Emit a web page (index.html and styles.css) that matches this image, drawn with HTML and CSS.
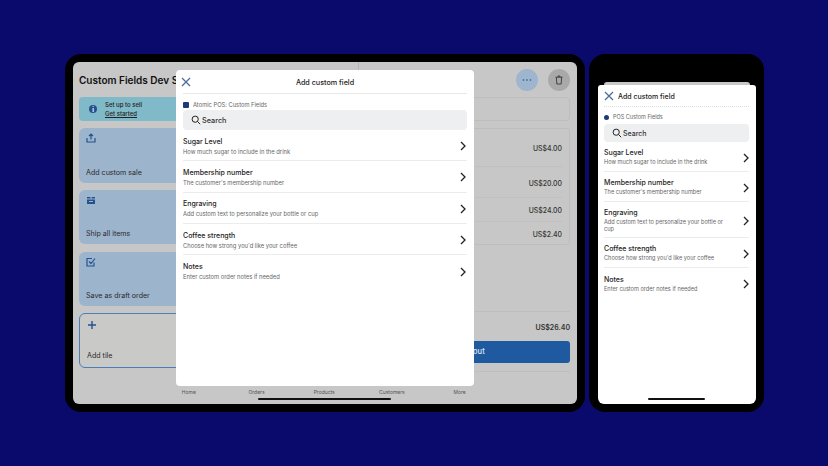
FILE: index.html
```html
<!DOCTYPE html>
<html>
    <head>
        <title>Add custom field</title>
        <link rel="stylesheet" href="styles.css">
    </head>
    <body>
        <div class="stage">
            <div class="tablet">
                <div class="screen">
                    <header class="top">
                        <h1>Custom Fields Dev Store</h1>
                        <span class="round more"><svg width="10" height="4" viewBox="0 0 10 4"><circle cx="1.5" cy="2" r="0.8"/><circle cx="5" cy="2" r="0.8"/><circle cx="8.5" cy="2" r="0.8"/></svg></span>
                        <span class="round trash"><svg width="10" height="10" viewBox="0 0 10 10"><path d="M1.5 2.2h7M4 2.2V1h2v1.2M2.4 2.2l.4 6.8h4.4l.4-6.8" fill="none" stroke="#444" stroke-width="1"/></svg></span>
                    </header>
                    <div class="main">
                        <div class="tiles">
                            <div class="setup">
                                <span class="info">i</span>
                                <div>
                                    <div>Set up to sell</div>
                                    <a>Get started</a>
                                </div>
                            </div>
                            <div class="tile">
                                <svg width="10" height="10" viewBox="0 0 10 10"><path d="M1 5v4h8V5M5 6.5V1M3 3l2-2 2 2" fill="none" stroke="#24528f" stroke-width="1.2"/></svg>
                                <span>Add custom sale</span>
                            </div>
                            <div class="tile">
                                <svg width="10" height="10" viewBox="0 0 10 10"><path d="M1 2h3.4v1.5H1zM5.6 2H9v1.5H5.6zM1 4.5h8V9H1z" fill="#24528f"/><path d="M3 6.5h4" stroke="#a0b6cc"/></svg>
                                <span>Ship all items</span>
                            </div>
                            <div class="tile">
                                <svg width="10" height="10" viewBox="0 0 10 10"><path d="M8 5.5V9H1V1.5h5M3 4.5l2 2L9 1.5" fill="none" stroke="#24528f" stroke-width="1.2"/></svg>
                                <span>Save as draft order</span>
                            </div>
                            <div class="tile add">
                                <svg width="10" height="10" viewBox="0 0 10 10"><path d="M5 1v8M1 5h8" fill="none" stroke="#24528f" stroke-width="1.4"/></svg>
                                <span>Add tile</span>
                            </div>
                        </div>
                        <div class="cart">
                            <div class="customer"></div>
                            <div class="lines">
                                <div class="price first">US$4.00</div>
                                <div class="price second">US$20.00</div>
                                <div class="price third">US$24.00</div>
                                <div class="price fourth">US$2.40</div>
                            </div>
                            <div class="pay">
                                <div class="total">US$26.40</div>
                                <div class="checkout">Checkout</div>
                            </div>
                        </div>
                    </div>
                    <nav class="tabs">
                        <span>Home</span>
                        <span>Orders</span>
                        <span>Products</span>
                        <span>Customers</span>
                        <span>More</span>
                    </nav>
                    <div class="handle wide"></div>

                    <div class="modal">
                        <div class="modal-head">
                            <svg class="close" width="10" height="10" viewBox="0 0 10 10"><path d="M1 1l8 8M9 1l-8 8" fill="none" stroke="#4a6f9c" stroke-width="1.3"/></svg>
                            <h2>Add custom field</h2>
                        </div>
                        <div class="source"><span class="app-icon"></span>Atomic POS: Custom Fields</div>
                        <div class="search">
                            <svg width="10" height="10" viewBox="0 0 10 10"><circle cx="4.2" cy="4.2" r="3.1" fill="none" stroke="#222" stroke-width="1"/><path d="M6.5 6.5L9.2 9.2" stroke="#222" stroke-width="1"/></svg>
                            Search
                        </div>
                        <div class="row">
                            <div class="text"><b>Sugar Level</b><small>How much sugar to include in the drink</small></div>
                            <svg class="chevron" width="6" height="10" viewBox="0 0 6 10"><path d="M1 1l4 4-4 4" fill="none" stroke="#222" stroke-width="1.3"/></svg>
                        </div>
                        <div class="row">
                            <div class="text"><b>Membership number</b><small>The customer's membership number</small></div>
                            <svg class="chevron" width="6" height="10" viewBox="0 0 6 10"><path d="M1 1l4 4-4 4" fill="none" stroke="#222" stroke-width="1.3"/></svg>
                        </div>
                        <div class="row">
                            <div class="text"><b>Engraving</b><small>Add custom text to personalize your bottle or cup</small></div>
                            <svg class="chevron" width="6" height="10" viewBox="0 0 6 10"><path d="M1 1l4 4-4 4" fill="none" stroke="#222" stroke-width="1.3"/></svg>
                        </div>
                        <div class="row">
                            <div class="text"><b>Coffee strength</b><small>Choose how strong you'd like your coffee</small></div>
                            <svg class="chevron" width="6" height="10" viewBox="0 0 6 10"><path d="M1 1l4 4-4 4" fill="none" stroke="#222" stroke-width="1.3"/></svg>
                        </div>
                        <div class="row last">
                            <div class="text"><b>Notes</b><small>Enter custom order notes if needed</small></div>
                            <svg class="chevron" width="6" height="10" viewBox="0 0 6 10"><path d="M1 1l4 4-4 4" fill="none" stroke="#222" stroke-width="1.3"/></svg>
                        </div>
                    </div>
                </div>
            </div>

            <div class="phone">
                <div class="phone-screen">
                    <div class="sheet-behind"></div>
                    <div class="sheet">
                        <div class="sheet-head">
                            <svg class="close" width="10" height="10" viewBox="0 0 10 10"><path d="M1 1l8 8M9 1l-8 8" fill="none" stroke="#4a6f9c" stroke-width="1.3"/></svg>
                            <h2>Add custom field</h2>
                        </div>
                        <div class="source"><span class="app-icon"></span>POS Custom Fields</div>
                        <div class="search">
                            <svg width="10" height="10" viewBox="0 0 10 10"><circle cx="4.2" cy="4.2" r="3.1" fill="none" stroke="#222" stroke-width="1"/><path d="M6.5 6.5L9.2 9.2" stroke="#222" stroke-width="1"/></svg>
                            Search
                        </div>
                        <div class="row">
                            <div class="text"><b>Sugar Level</b><small>How much sugar to include in the drink</small></div>
                            <svg class="chevron" width="6" height="10" viewBox="0 0 6 10"><path d="M1 1l4 4-4 4" fill="none" stroke="#222" stroke-width="1.3"/></svg>
                        </div>
                        <div class="row">
                            <div class="text"><b>Membership number</b><small>The customer's membership number</small></div>
                            <svg class="chevron" width="6" height="10" viewBox="0 0 6 10"><path d="M1 1l4 4-4 4" fill="none" stroke="#222" stroke-width="1.3"/></svg>
                        </div>
                        <div class="row tall">
                            <div class="text"><b>Engraving</b><small>Add custom text to personalize your bottle or cup</small></div>
                            <svg class="chevron" width="6" height="10" viewBox="0 0 6 10"><path d="M1 1l4 4-4 4" fill="none" stroke="#222" stroke-width="1.3"/></svg>
                        </div>
                        <div class="row">
                            <div class="text"><b>Coffee strength</b><small>Choose how strong you'd like your coffee</small></div>
                            <svg class="chevron" width="6" height="10" viewBox="0 0 6 10"><path d="M1 1l4 4-4 4" fill="none" stroke="#222" stroke-width="1.3"/></svg>
                        </div>
                        <div class="row last">
                            <div class="text"><b>Notes</b><small>Enter custom order notes if needed</small></div>
                            <svg class="chevron" width="6" height="10" viewBox="0 0 6 10"><path d="M1 1l4 4-4 4" fill="none" stroke="#222" stroke-width="1.3"/></svg>
                        </div>
                        <div class="handle narrow"></div>
                    </div>
                </div>
            </div>
        </div>
    </body>
</html>
```

FILE: styles.css
```css
* {
    box-sizing: border-box;
}
html, body {
    height: 100%;
}
body {
    margin: 0;
    background: #0a0a6c;
    color: #222;
    font-family: Inter, "Liberation Sans", sans-serif;
    overflow: hidden;
}
h1, h2 {
    margin: 0;
}
.stage {
    display: flex;
    gap: 4px;
    padding: 54px 0 0 65px;
}

/* tablet */
.tablet {
    width: 520px;
    height: 358px;
    padding: 8px;
    background: #000;
    border-radius: 16px;
}
.screen {
    position: relative;
    display: flex;
    flex-direction: column;
    height: 100%;
    padding: 0 7px 0 6px;
    background: #c6c7c6;
    border-radius: 6px;
    overflow: hidden;
}
.top {
    display: flex;
    align-items: center;
    gap: 10px;
    height: 35px;
    flex: none;
}
.top h1 {
    flex: none;
    width: 280px;
    height: 100%;
    margin-right: auto;
    padding-top: 12px;
    border-right: 1px solid #b4b5b4;
    font-size: 10px;
    line-height: 12px;
    font-weight: 600;
    color: #111;
}
.round {
    display: flex;
    align-items: center;
    justify-content: center;
    width: 22px;
    height: 22px;
    border-radius: 50%;
}
.more {
    background: #9db5cd;
    fill: #24528f;
}
.trash {
    background: #a9a9a9;
}
.main {
    display: flex;
    gap: 8px;
    height: 289px;
    flex: none;
}
.tiles {
    display: flex;
    flex-direction: column;
    gap: 7.2px;
    width: 272px;
    flex: none;
}
.setup {
    display: flex;
    align-items: center;
    gap: 8px;
    height: 24px;
    padding-left: 10px;
    background: #80b9c7;
    border-radius: 4px;
    font-size: 6px;
    font-weight: 500;
    line-height: 9px;
}
.setup a {
    text-decoration: underline;
}
.info {
    display: flex;
    align-items: center;
    justify-content: center;
    width: 8px;
    height: 8px;
    border-radius: 50%;
    background: #24528f;
    color: #fff;
    font-size: 6px;
    font-weight: 700;
}
.tile {
    display: flex;
    flex-direction: column;
    justify-content: space-between;
    height: 54.5px;
    padding: 5px 7px 6px;
    background: #9cb4cc;
    border-radius: 6px;
    font-size: 7.1px;
    line-height: 9px;
    color: #2a2a2a;
}
.tile.add {
    padding: 6px 7px 7px;
    background: #c9c9c8;
    border: 1px solid #4d7db8;
}
.cart {
    display: flex;
    flex-direction: column;
    flex: 1;
    font-size: 6.9px;
    font-weight: 500;
    color: #333;
}
.customer {
    height: 24px;
    margin-bottom: 7px;
    border: 1px solid #bcbdbc;
    border-radius: 4px;
}
.lines {
    height: 117px;
    border: 1px solid #bcbdbc;
    border-radius: 4px;
    flex: none;
}
.price {
    display: flex;
    align-items: center;
    justify-content: flex-end;
    margin-right: 7px;
    padding-top: 2px;
    border-bottom: 1px solid #bfc0bf;
}
.price.first {
    height: 38px;
}
.price.second {
    height: 31px;
}
.price.third {
    height: 24px;
}
.price.fourth {
    height: 23px;
    border-bottom: 0;
}
.pay {
    margin-top: 66px;
    padding-bottom: 8px;
    border-top: 1px solid #bdbebd;
    border-bottom: 1px solid #bdbebd;
}
.total {
    padding: 10px 0 8px;
    text-align: right;
    line-height: 11px;
    font-size: 7px;
    font-weight: 600;
}
.checkout {
    height: 22px;
    padding-left: 6px;
    background: #1f5aa1;
    border-radius: 3px;
    color: #dfe7f1;
    text-align: center;
    line-height: 22px;
    font-size: 7.5px;
}
.tabs {
    display: grid;
    grid-template-columns: repeat(5, 67.7px);
    margin-left: 76px;
    padding-top: 3px;
    font-size: 5px;
    color: #555;
    text-align: center;
}
.handle {
    position: absolute;
    height: 2px;
    bottom: 4px;
    background: #111;
    border-radius: 1px;
}
.handle.wide {
    left: 185px;
    width: 133px;
}

/* sheet on the tablet, sits over the store screen */
.modal {
    position: absolute;
    left: 103px;
    top: 8px;
    width: 298px;
    height: 316px;
    padding: 0 7px;
    background: #fff;
    border-radius: 4px;
}
.modal-head {
    position: relative;
    display: flex;
    align-items: center;
    justify-content: center;
    height: 24px;
    padding-top: 1px;
    border-bottom: 1px solid #e8e8e8;
    margin-bottom: 5px;
}
.modal-head .close {
    position: absolute;
    left: -2px;
    top: 7px;
}
h2 {
    font-size: 7.2px;
    font-weight: 500;
    color: #222;
}
.source {
    display: flex;
    align-items: center;
    gap: 4px;
    height: 11px;
    font-size: 5.75px;
    color: #666;
}
.app-icon {
    width: 6px;
    height: 6px;
    background: #1c3b78;
    border-radius: 1px;
}
.search {
    display: flex;
    align-items: center;
    gap: 1px;
    height: 20px;
    padding-left: 8px;
    background: #eeeff1;
    border-radius: 4px;
    font-size: 7.3px;
    font-weight: 500;
    color: #333;
}
.row {
    display: flex;
    align-items: center;
    justify-content: space-between;
    height: 31.3px;
    padding: 2px 1px 0 0;
    border-bottom: 1px solid #ececec;
}
.row.last {
    border-bottom: 0;
}
.text b {
    display: block;
    font-size: 7px;
    font-weight: 500;
    line-height: 10px;
    color: #222;
}
.text small {
    display: block;
    font-size: 5.8px;
    line-height: 9px;
    color: #666;
}

/* phone */
.phone {
    width: 175px;
    height: 358px;
    padding: 8px 8px 8px 9px;
    background: #000;
    border-radius: 16px;
}
.phone-screen {
    display: flex;
    flex-direction: column;
    height: 100%;
    padding-top: 20px;
}
.sheet-behind {
    height: 3px;
    margin: 0 6px;
    background: #c8c8c8;
    border-radius: 3px 3px 0 0;
    flex: none;
}
.sheet {
    position: relative;
    flex: 1;
    padding: 0 7px 0 6px;
    background: #fff;
    border-radius: 3px 3px 6px 6px;
}
.sheet-head {
    display: flex;
    align-items: center;
    gap: 4px;
    height: 22px;
    padding-top: 1px;
    border-bottom: 1px dotted #ddd;
    margin-bottom: 5px;
}
.sheet h2 {
    font-size: 7px;
}
.sheet .search {
    height: 18px;
    gap: 1px;
    font-size: 7px;
}
.sheet .row {
    height: 30px;
    padding: 2px 0 0 0;
}
.sheet .row.tall {
    height: 36px;
}
.sheet .source {
    height: 10px;
    margin-bottom: 2px;
    font-size: 5.5px;
}
.sheet .app-icon {
    width: 5px;
    height: 5px;
    border-radius: 50%;
}
.sheet .text small {
    width: 125px;
    margin-top: 1px;
    font-size: 5.6px;
    line-height: 7.5px;
}
.handle.narrow {
    left: 50px;
    width: 57px;
}
```
